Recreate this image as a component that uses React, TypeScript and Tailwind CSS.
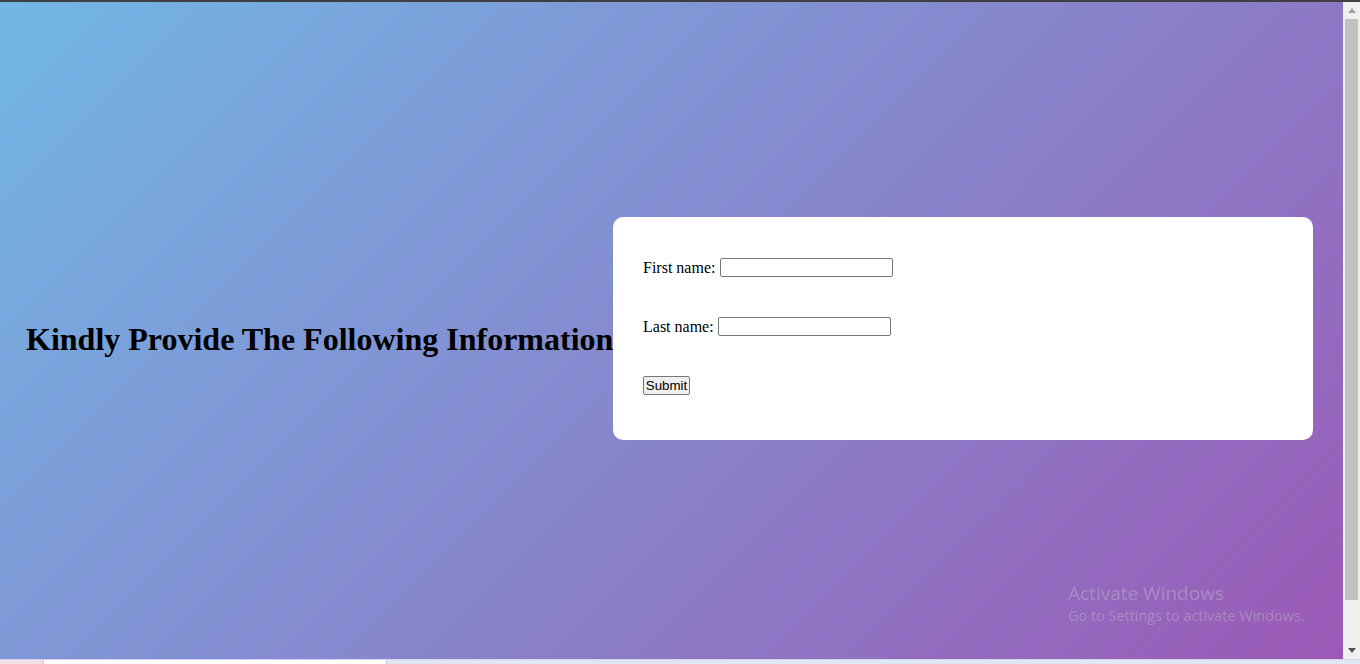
import React from "react";

export default function App() {
  return (
    <div className="flex h-[664px] w-[1360px] flex-col overflow-hidden bg-white">
      <div className="h-[2px] shrink-0 bg-[#3f3f3f]" />
      <div className="flex h-[657px] shrink-0">
        <main className="relative flex flex-1 items-center bg-[linear-gradient(135deg,#71b7e6,#9b59b6)]">
          <div className="mt-[17px] w-[613px] shrink-0 pl-[26px]">
            <h1 className="whitespace-nowrap font-['Liberation_Serif','Times_New_Roman',serif] text-[32px] font-bold leading-[37px] text-black">
              Kindly Provide The Following Information
            </h1>
          </div>
          <div className="mb-[4px] flex w-[700px] shrink-0 flex-col gap-[40px] rounded-[10px] bg-white px-[30px] pb-[45px] pt-[41px] font-['Liberation_Serif','Times_New_Roman',serif] text-[16px] text-black">
            <div className="flex h-[19px] items-center">
              <label className="whitespace-nowrap">First name:</label>
              <input
                type="text"
                className="ml-[5px] h-[19px] w-[173px] rounded-[2px] border border-[#767676] bg-white outline-none"
              />
            </div>
            <div className="flex h-[19px] items-center">
              <label className="whitespace-nowrap">Last name:</label>
              <input
                type="text"
                className="ml-[4px] h-[19px] w-[173px] rounded-[2px] border border-[#767676] bg-white outline-none"
              />
            </div>
            <div className="flex h-[19px] items-center">
              <button className="flex h-[19px] w-[47px] items-center justify-center rounded-[2px] border border-[#767676] bg-[#efefef] font-['Liberation_Sans',Arial,sans-serif] text-[13.33px] leading-none text-black">
                Submit
              </button>
            </div>
          </div>
          <div className="pointer-events-none absolute left-[1068px] top-[578px] font-['Open_Sans','Noto_Sans',sans-serif] text-[rgba(190,190,200,0.45)]">
            <div className="text-[19px] leading-[26px]">Activate Windows</div>
            <div className="text-[14.45px] leading-[20px]">Go to Settings to activate Windows.</div>
          </div>
        </main>
        <div className="flex w-[17px] shrink-0 flex-col bg-[#f0f0f0]">
          <div className="flex h-[17px] items-center justify-center">
            <svg width="8" height="5" viewBox="0 0 8 5">
              <polygon points="0,5 8,5 4,0" fill="#a3a3a3" />
            </svg>
          </div>
          <div className="mx-[2px] h-[581px] bg-[#c1c1c1]" />
          <div className="flex-1" />
          <div className="flex h-[17px] items-center justify-center">
            <svg width="8" height="5" viewBox="0 0 8 5">
              <polygon points="0,0 8,0 4,5" fill="#505050" />
            </svg>
          </div>
        </div>
      </div>
      <div className="flex h-[5px] shrink-0 border-t border-[#d6d3ec]">
        <div className="w-[43px] bg-[#f3dfe8]" />
        <div className="w-[344px] border-x border-[#c9c9c9] bg-white" />
        <div className="flex-1 bg-[#dfe7f3]" />
      </div>
    </div>
  );
}
